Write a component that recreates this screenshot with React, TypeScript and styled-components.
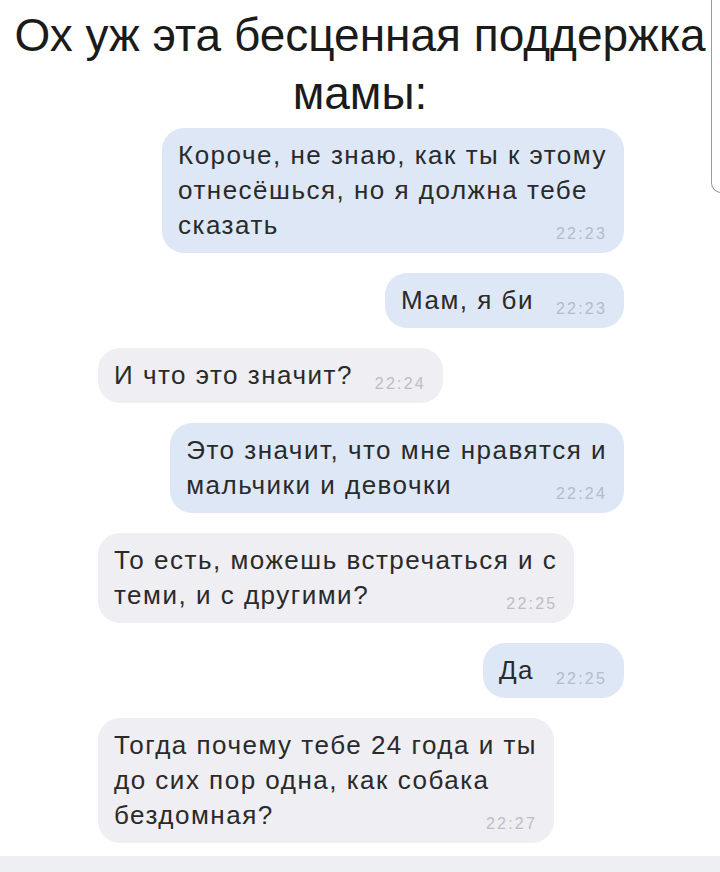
import React from "react";
import styled, { createGlobalStyle } from "styled-components";

const Global = createGlobalStyle`
  html, body { margin: 0; padding: 0; background: #ffffff; }
  #root { width: 720px; }
`;

const Page = styled.div`
  position: relative;
  width: 720px;
  height: 872px;
  overflow: hidden;
  background: #ffffff;
  display: flex;
  flex-direction: column;
`;

const Title = styled.h1`
  margin: 0;
  padding: 6px 0 0 0;
  font-family: "Liberation Sans", Arial, sans-serif;
  font-weight: 400;
  font-size: 46px;
  line-height: 58px;
  color: #1b1b1b;
  text-align: center;
`;

const Chat = styled.div`
  flex: 1;
  display: flex;
  flex-direction: column;
  gap: 20px;
  padding: 6px 96px 0 98px;
`;

type Side = "out" | "in";

const Bubble = styled.div<{ $side: Side }>`
  align-self: ${(p) => (p.$side === "out" ? "flex-end" : "flex-start")};
  background: ${(p) => (p.$side === "out" ? "#dde7f6" : "#eeeef3")};
  border-radius: 22px;
  padding: 10px 17px 10px 16px;
  font-family: "Liberation Sans", Arial, sans-serif;
  font-size: 26px;
  line-height: 35px;
  letter-spacing: 1.5px;
  color: #2a2a2a;
  display: flex;
  flex-direction: column;
`;

const Line = styled.div`
  white-space: nowrap;
`;

const LastLine = styled.div`
  display: flex;
  justify-content: space-between;
  gap: 22px;
  white-space: nowrap;
`;

const Time = styled.span<{ $side: Side }>`
  align-self: flex-end;
  font-family: "Liberation Sans", Arial, sans-serif;
  font-size: 16px;
  line-height: 19px;
  letter-spacing: 2.2px;
  color: ${(p) => (p.$side === "out" ? "#b3bccb" : "#bdbdc6")};
`;

const EdgeLine = styled.div`
  position: absolute;
  left: 711px;
  top: -2px;
  width: 20px;
  height: 194px;
  border-left: 1px solid #9b9b9b;
  border-bottom: 1px solid #9b9b9b;
  border-bottom-left-radius: 10px;
`;

const BottomBar = styled.div`
  height: 16px;
  background: #eeeff2;
`;

type Msg = { side: Side; lines: string[]; time: string };

const messages: Msg[] = [
  {
    side: "out",
    lines: ["Короче, не знаю, как ты к этому", "отнесёшься, но я должна тебе", "сказать"],
    time: "22:23",
  },
  { side: "out", lines: ["Мам, я би"], time: "22:23" },
  { side: "in", lines: ["И что это значит?"], time: "22:24" },
  {
    side: "out",
    lines: ["Это значит, что мне нравятся и", "мальчики и девочки"],
    time: "22:24",
  },
  {
    side: "in",
    lines: ["То есть, можешь встречаться и с", "теми, и с другими?"],
    time: "22:25",
  },
  { side: "out", lines: ["Да"], time: "22:25" },
  {
    side: "in",
    lines: ["Тогда почему тебе 24 года и ты", "до сих пор одна, как собака", "бездомная?"],
    time: "22:27",
  },
];

export default function App() {
  return (
    <Page>
      <Global />
      <Title>
        Ох уж эта бесценная поддержка
        <br />
        мамы:
      </Title>
      <Chat>
        {messages.map((m, i) => (
          <Bubble key={i} $side={m.side}>
            {m.lines.slice(0, -1).map((l, j) => (
              <Line key={j}>{l}</Line>
            ))}
            <LastLine>
              <span>{m.lines[m.lines.length - 1]}</span>
              <Time $side={m.side}>{m.time}</Time>
            </LastLine>
          </Bubble>
        ))}
      </Chat>
      <BottomBar />
      <EdgeLine />
    </Page>
  );
}
